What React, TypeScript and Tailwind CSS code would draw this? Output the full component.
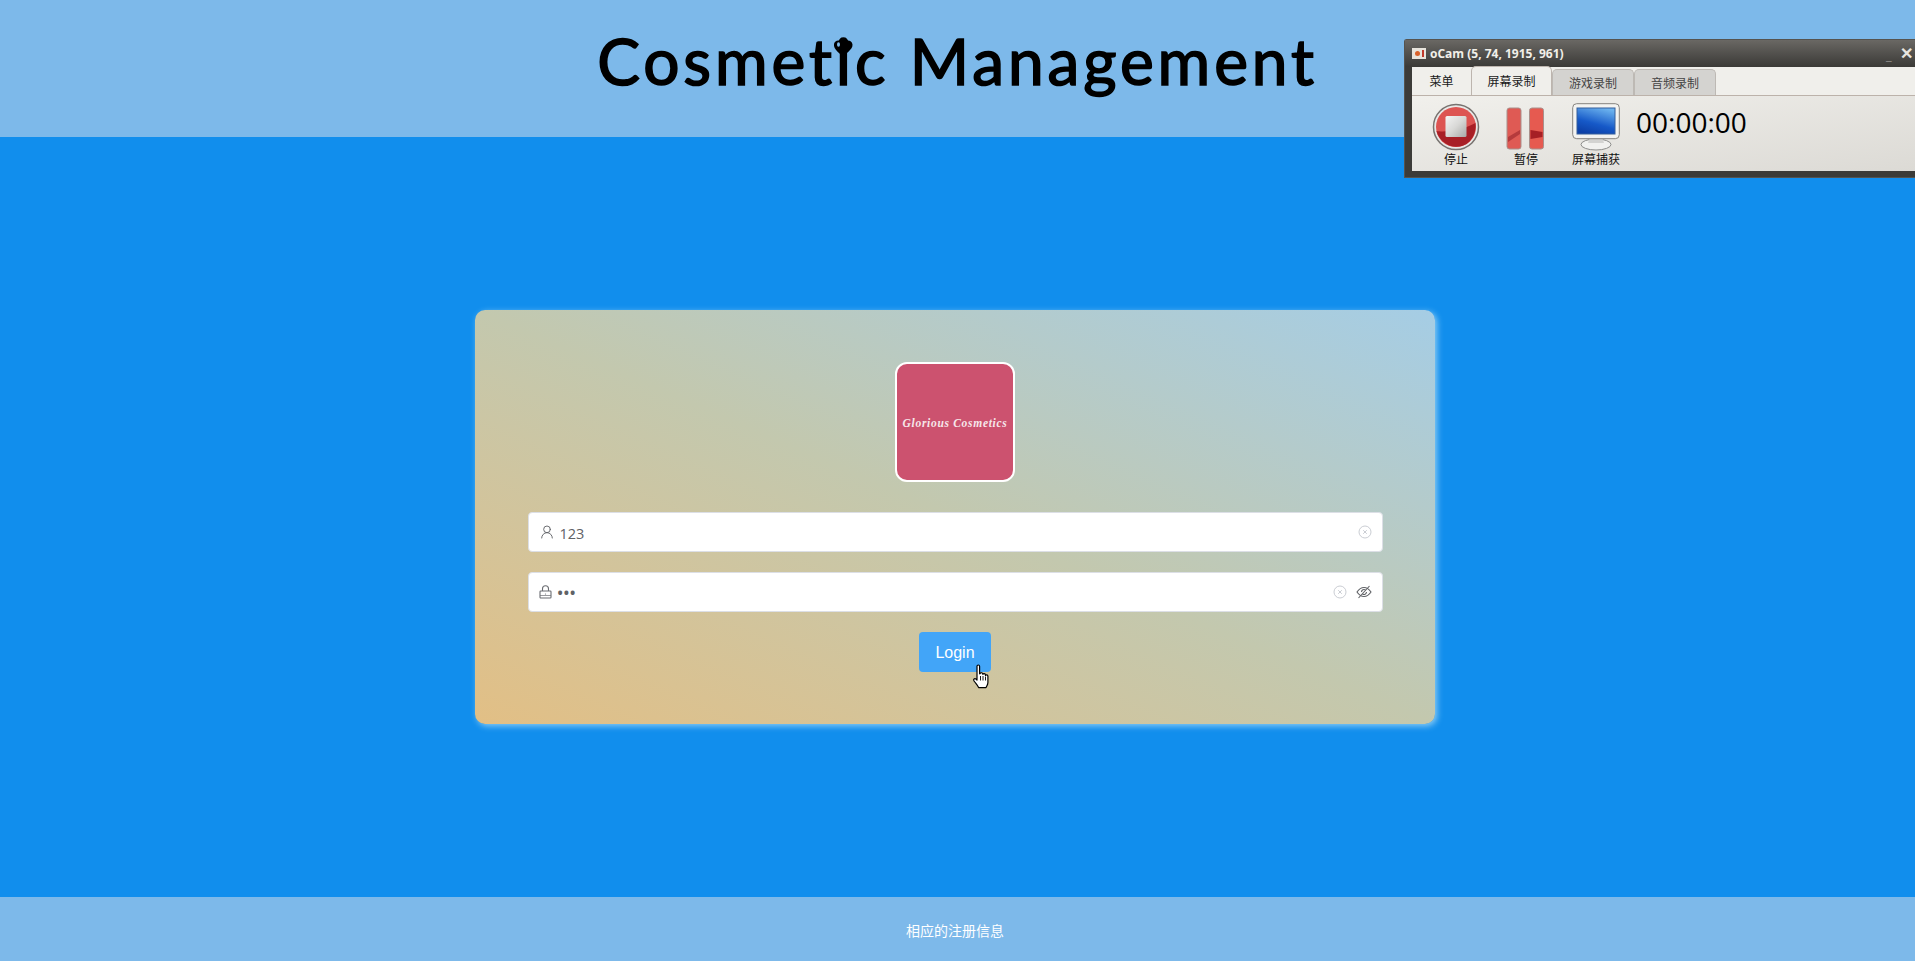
import { UserRound } from "lucide-react";

const sans = "font-['Open_Sans','Noto_Sans_CJK_SC',sans-serif]";
const cjk = "font-['Noto_Sans_CJK_SC','Noto_Sans',sans-serif]";

// hand cursor sitting on top of the login button
function HandCursor() {
  return (
    <svg className="absolute left-[53px] top-[32px]" width="20" height="26" viewBox="0 0 20 26">
      <path
        d="M5 2.2c0-1.6 2.6-1.6 2.6 0v7.6l.6-.2c0-1.2 2.5-1.2 2.6.2l.1.5c.3-1.1 2.4-1 2.5.4l.1.6c.6-.9 2.400-.6 2.400.9v6.400c0 2.300-1.200 3.400-1.900 5H6.600c-1-2.400-2.400-3.600-4.600-6.600-1.100-1.500.6-3.200 2-2l1 1.100z"
        fill="#fff"
        stroke="#000"
        strokeWidth="1.200"
        strokeLinejoin="round"
      />
      <path d="M8.500 12v4.500M11 12v4.500M13.500 12.500v4" stroke="#000" strokeWidth="0.900" />
    </svg>
  );
}

function ClearIcon() {
  return (
    <svg width="14" height="14" viewBox="0 0 14 14" fill="none" stroke="#c4c7ce">
      <circle cx="7" cy="7" r="6" strokeWidth="0.900" />
      <path d="M5.200 5.200l3.600 3.600M8.800 5.200l-3.600 3.600" strokeWidth="0.900" />
    </svg>
  );
}

function EyeSlashIcon() {
  return (
    <svg width="16" height="14" viewBox="0 0 16 14" fill="none" stroke="#606266" strokeWidth="1.100">
      <path d="M1 7c2-3 4.300-4.500 7-4.500S13 4 15 7c-2 3-4.300 4.500-7 4.500S3 10 1 7z" />
      <path d="M5.500 7a2.500 2.500 0 0 1 4-2M10.500 7a2.500 2.500 0 0 1-4 2" />
      <path d="M2.500 13L13.500 1" />
    </svg>
  );
}

function LockIcon() {
  return (
    <svg width="13" height="14" viewBox="0 0 13 14" fill="none" stroke="#6b6d72" strokeWidth="1.100">
      <path d="M3.500 6V3.800a3 3 0 0 1 6 0V6" />
      <rect x="1" y="6" width="11" height="7" rx="0.800" />
      <path d="M1 10.500h11" strokeWidth="0.700" />
      <circle cx="6.500" cy="9" r="0.600" fill="#6b6d72" stroke="none" />
    </svg>
  );
}

function StopIcon() {
  return (
    <svg width="48" height="48" viewBox="0 0 48 48">
      <defs>
        <linearGradient id="stopFace" x1="0" y1="0" x2="1" y2="1">
          <stop offset="0" stopColor="#f4f4f4" />
          <stop offset="0.5" stopColor="#d8d8d6" />
          <stop offset="1" stopColor="#a8a8a6" />
        </linearGradient>
      </defs>
      <circle cx="24" cy="24" r="22.500" fill="#e9e8e6" stroke="#77726f" strokeWidth="1.500" />
      <circle cx="24" cy="24" r="20" fill="#dd5452" />
      <path d="M4.500 28c6 1 22 1 39-8 1 9-3 17-9 21-5 3-14 4-20 0-5-3-9-8-10-13z" fill="#a81f26" />
      <rect x="13.500" y="13" width="21" height="21" rx="1.500" fill="url(#stopFace)" />
    </svg>
  );
}

function PauseIcon() {
  return (
    <svg width="40" height="44" viewBox="0 0 40 44">
      <rect x="1" y="1" width="14" height="41" rx="2.500" fill="#df5a54" stroke="#a9908c" />
      <rect x="23.500" y="1" width="14" height="41" rx="2.500" fill="#e65a50" stroke="#a9908c" />
      <path d="M2 30l12-7v4L2 35z" fill="#b53a3c" />
      <path d="M24.500 23l12 2v5l-12 2z" fill="#a61f25" />
    </svg>
  );
}

function MonitorIcon() {
  return (
    <svg width="48" height="48" viewBox="0 0 48 48">
      <defs>
        <linearGradient id="screen" x1="0.700" y1="0" x2="0.300" y2="1">
          <stop offset="0" stopColor="#6bb2ee" />
          <stop offset="0.6" stopColor="#1659c8" />
          <stop offset="1" stopColor="#0c3fa6" />
        </linearGradient>
      </defs>
      <ellipse cx="24" cy="41.500" rx="15" ry="5.500" fill="#f1f1ef" stroke="#8d8d8b" />
      <path d="M18 34h12l2 6H16z" fill="#d3d3d1" />
      <rect x="0.700" y="0.700" width="46.600" height="35" rx="4" fill="#f3f3f1" stroke="#85837f" />
      <rect x="5" y="5" width="38" height="26" fill="url(#screen)" stroke="#355f9c" />
    </svg>
  );
}

function Tab({ label, active }: { label: string; active?: boolean }) {
  return (
    <div
      className={
        active
          ? "flex h-[29px] w-[81px] items-center justify-center rounded-t-[5px] border border-b-0 border-[#bdb5ae] bg-[#f0efeb] text-[12px] text-[#1a1a1a]"
          : "mt-[2px] flex h-[26px] w-[82px] items-center justify-center rounded-t-[5px] border border-b-0 border-[#bdb9b4] bg-[#d4d3d0] text-[12px] text-[#444]"
      }
    >
      {label}
    </div>
  );
}

function OcamWindow() {
  return (
    <div className={`absolute left-[1404px] right-0 top-[39px] flex h-[139px] flex-col rounded-tl-[3px] border border-r-0 border-[#55534f] bg-[#3c3b38] pl-[7px] pb-[6px] ${cjk}`}>
      <div className="-ml-[7px] flex h-[27px] items-center bg-linear-to-b from-[#6a6864] to-[#3b3a37] pl-[7px]">
        <div className="flex h-[11px] w-[14px] items-center justify-center bg-[#e8e4dc]">
          <div className="h-[5px] w-[5px] rounded-full bg-[#d9622b]" />
          <div className="ml-[2px] h-[7px] w-[2px] bg-[#c0392b]" />
        </div>
        <span className="ml-[4px] font-['Open_Sans',sans-serif] text-[12px] font-bold text-[#f1efe9]">oCam (5, 74, 1915, 961)</span>
        <span className="ml-auto mr-[8px] mt-[3px] text-[11px] leading-none text-[#9a9894]">_</span>
        <span className="mr-[2px] font-['Liberation_Sans',sans-serif] text-[16px] font-bold leading-none text-[#e6e4df]">✕</span>
      </div>
      <div className="flex h-[29px] items-end border-b border-[#bcb2aa] bg-[#f0efeb]">
        <div className="flex h-[28px] w-[59px] items-center justify-center text-[12px] text-[#1a1a1a]">菜单</div>
        <Tab label="屏幕录制" active />
        <Tab label="游戏录制" />
        <Tab label="音频录制" />
      </div>
      <div className="flex flex-1 bg-linear-to-br from-[#f1f0ec] to-[#dcdad5] pl-[9px] pt-[7px] text-[12px] leading-none text-[#111]">
        <div className="flex w-[70px] flex-col items-center">
          <div className="flex h-[48px] items-center"><StopIcon /></div>
          <span className="mt-[2px]">停止</span>
        </div>
        <div className="flex w-[70px] flex-col items-center">
          <div className="mt-[3px] flex h-[45px] items-center"><PauseIcon /></div>
          <span className="mt-[2px]">暂停</span>
        </div>
        <div className="flex w-[70px] flex-col items-center">
          <MonitorIcon />
          <span className="mt-[2px] whitespace-nowrap">屏幕捕获</span>
        </div>
        <span className={`ml-[5px] mt-[1px] text-[28px] leading-[36px] text-black ${sans}`}>00:00:00</span>
      </div>
    </div>
  );
}

function Field({ children, right }: { children: React.ReactNode; right: React.ReactNode }) {
  return (
    <div className="flex h-10 items-center rounded-[4px] border border-[#dcdfe6] bg-white px-[10px] text-[#606266]">
      {children}
      <div className="ml-auto flex items-center gap-[9px]">{right}</div>
    </div>
  );
}

export default function App() {
  return (
    <div className={`relative flex h-screen flex-col overflow-hidden bg-[#118eed] ${sans}`}>
      <header className="flex h-[137px] shrink-0 items-start justify-center bg-[#7db9ea]">
        <h1 className="mt-[16px] font-['Lato',sans-serif] text-[64px] font-normal leading-[90px] tracking-[3.900px] text-black [-webkit-text-stroke:1.600px_black]">
          Cosmet
          <span className="relative">
            i
            <svg className="absolute left-[-4px] top-[15px]" width="22" height="22" viewBox="0 0 22 22">
              <path d="M11 21C9 16 1 13 2 7c.8-4 6-5 9-.8C14 2 20 3 20.500 7.500 21 13 13 16 11 21z" fill="#000" />
              <ellipse cx="6.500" cy="7.500" rx="1.500" ry="2.200" fill="#7db9ea" />
            </svg>
          </span>
          c Management
        </h1>
      </header>

      <main className="flex flex-1 items-center justify-center pr-[5px]">
        <div className="flex h-[414px] w-[960px] flex-col items-center rounded-[10px] bg-linear-to-tr from-[#e2bf85] via-[#c3c8ae] to-[#a5cde5] px-[52.500px] pt-[52px] shadow-[2px_2px_6px_#8ccdf5]">
          <div className="flex h-[120px] w-[120px] items-center justify-center rounded-[12px] border-2 border-white bg-[#cc526f]">
            <span className="relative top-[2px] whitespace-nowrap font-['Liberation_Serif',serif] text-[11.500px] font-bold italic tracking-[0.700px] text-[#f6e6ea]">Glorious Cosmetics</span>
          </div>
          <div className="mt-[30px] flex w-full flex-col gap-[20px]">
            <Field right={<ClearIcon />}>
              <UserRound size={16} strokeWidth={1.400} className="text-[#606266]" />
              <span className="ml-[5px] pt-[4px] text-[14.500px]">123</span>
            </Field>
            <Field
              right={
                <>
                  <ClearIcon />
                  <EyeSlashIcon />
                </>
              }
            >
              <LockIcon />
              <span className="ml-[6px] text-[14px] font-bold tracking-[1px]">•••</span>
            </Field>
          </div>
          <button className="relative mt-[20px] h-10 w-[72px] rounded-[4px] bg-[#42a5f8] pt-[1px] font-['Liberation_Sans',sans-serif] text-[16px] text-white">
            Login
            <HandCursor />
          </button>
        </div>
      </main>

      <footer className={`flex h-[64px] shrink-0 items-center justify-center bg-[#7db9ea] pr-[5px] pt-[2px] text-[14px] text-white ${cjk}`}>
        相应的注册信息
      </footer>

      <OcamWindow />
    </div>
  );
}
